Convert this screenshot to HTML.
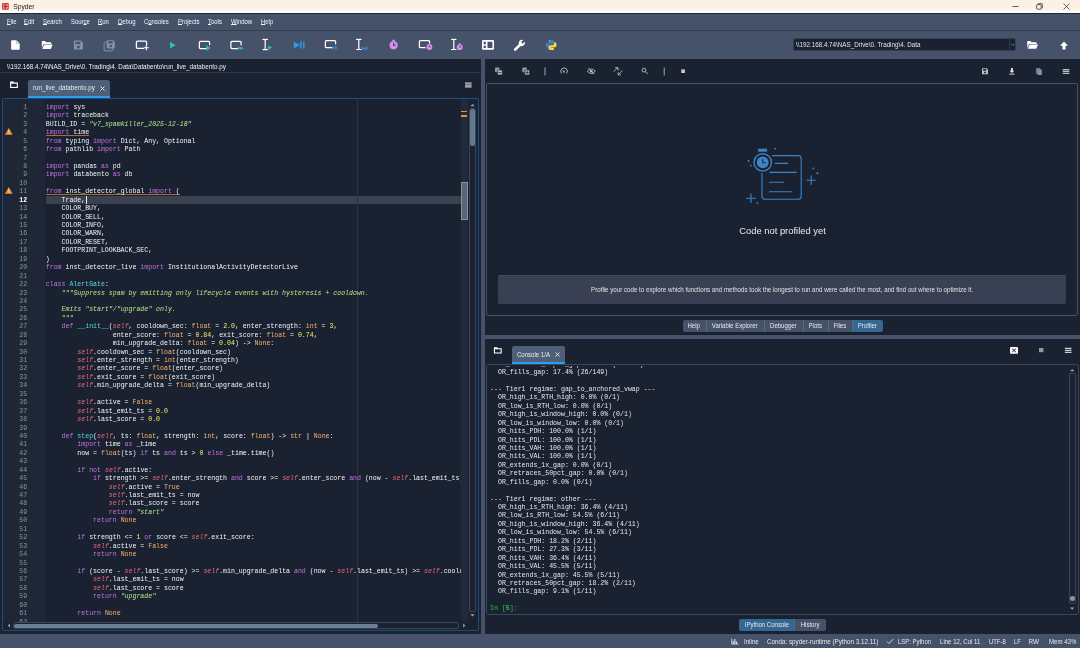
<!DOCTYPE html>
<html lang="en">
<head>
<meta charset="utf-8">
<title>Spyder</title>
<style>
*{box-sizing:border-box;margin:0;padding:0}
html,body{width:1080px;height:648px;overflow:hidden;background:#1a2232}
body{position:relative;font-family:"Liberation Sans","DejaVu Sans",sans-serif;font-size:6.6px;color:#e0e4e8;-webkit-font-smoothing:antialiased;will-change:transform}
.abs{position:absolute}
svg{position:absolute;overflow:visible}
#ico{z-index:10;pointer-events:none}
/* title bar */
#title{left:0;top:0;width:1080px;height:13px;background:linear-gradient(#fbf1e6 0,#fbf1e6 70%,#fffdfb 92%)}
#title .t{left:13.3px;top:1.7px;font-size:6.7px;line-height:9px;color:#1c1c1c}
/* menubar */
#menu{left:0;top:12.5px;width:1080px;height:18px;background:#46526a;border-top:1px solid #1d2633;border-bottom:1px solid #313d4d}
#menu span{position:absolute;transform:scaleX(.93);transform-origin:0 0;top:3.6px;line-height:9px;font-size:6.4px;color:#f2f4f6;white-space:nowrap}
#menu span u{text-decoration-thickness:0.5px;text-underline-offset:.3px}
/* toolbar */
#tool{left:0;top:30.5px;width:1080px;height:28.5px;background:#46526a}
#cwd{left:792.6px;top:37.8px;width:223.4px;height:13.2px;background:#1a2232;border:1px solid #33405a;border-radius:2px;color:#dfe3e8;font-size:6.6px;line-height:11.6px;padding-left:2.6px;white-space:nowrap}
#cwd i{position:absolute;left:215.5px;top:0;width:1px;height:11px;background:#2d384c}
#cwd span{display:inline-block;transform:scaleX(.951);transform-origin:0 0}
/* panes */
#split-v{left:480.7px;top:59px;width:4.4px;height:575px;background:#46526a}
#split-h{left:485px;top:334.6px;width:595px;height:4.6px;background:#46526a}
#status{left:0;top:634px;width:1080px;height:14px;background:#46526a}
#status span{position:absolute;transform:scaleX(.95);transform-origin:0 0;top:3px;line-height:9px;font-size:6.4px;color:#e6e9ec;white-space:nowrap}
/* editor pane */
#path{left:0;top:59px;width:481px;height:14px;border-bottom:1px solid #2c3749}
#path .t{transform:scaleX(.966);transform-origin:0 0;left:7px;top:3px;line-height:9px;font-size:6.5px;color:#eef0f3;white-space:nowrap}
#etab{left:28px;top:80px;width:81.7px;height:18px;background:#4f5f78;border-radius:2.5px 2.5px 0 0;border-bottom:2.3px solid #2a9df0}
#etab .t{transform:scaleX(.967);transform-origin:0 0;left:4.6px;top:3.3px;line-height:9px;font-size:6.5px;color:#e8ecef;white-space:nowrap}
#editor{left:2px;top:98.3px;width:477px;height:533.2px;border:1px solid #1c4d7e;border-radius:2px;background:#1a2232;overflow:hidden}
#gutter{left:0;top:0;width:41.5px;height:523px;background:#1f2736}
#nums{left:0;top:4.6px;width:24.2px}
.num{height:8.4375px;line-height:8.4375px;font-size:6.57px;text-align:right;color:#8a949e;font-family:"Liberation Mono","DejaVu Sans Mono",monospace}
.num.cur{color:#ffffff;font-weight:bold}
#code{left:42.8px;top:4.6px;width:415px;height:518.4px;overflow:hidden}
.ln,.cl{height:8.4375px;line-height:8.4375px;font-size:6.57px;white-space:pre;font-family:"Liberation Mono","DejaVu Sans Mono",monospace;color:#f2f4f6}
.k{color:#c670e0}.s{color:#b0e686;font-style:italic}.n{color:#faed5c}.b{color:#fab16c}.d{color:#57d6e4}.i{color:#ee6772;font-style:italic}
.u{background:linear-gradient(#dc852e,#dc852e) 0 6.2px/100% .75px no-repeat}
#curline{left:43px;top:96.3px;width:415px;height:8.4px;background:#3a4150}
#caret{left:82.6px;top:96.6px;width:1px;height:7.8px;background:#f2f4f6}
#edge{left:354px;top:0;width:1px;height:523px;background:#2a3446}
#flags{left:457.9px;top:0;width:7px;height:522px;background:#212a3a}
#flags i{position:absolute;left:.6px;width:5.6px;height:1.7px;background:#f0932b}
#flags b{position:absolute;left:0;top:82.8px;width:7px;height:38px;background:rgba(140,152,166,.55);border:1px solid rgba(170,180,192,.55)}
#vsb{left:466px;top:8.3px;width:7.2px;height:504px;background:#1a2232;border:1px solid #3b465c;border-radius:2px}
#vsb b{position:absolute;left:.2px;top:.6px;width:4.8px;height:37px;background:#60798b;border-radius:2px}
#hsb{left:9.5px;top:523.2px;width:446.5px;height:6.8px;background:#1a2232;border:1px solid #3b465c;border-radius:2px}
#hsb b{position:absolute;left:.8px;top:.2px;width:364px;height:4.6px;background:#6a8193;border-radius:2px}
/* profiler pane */
#pbox{left:485.8px;top:83.4px;width:592.4px;height:232.8px;border:1px solid #46526a;border-radius:2px;background:#1a2232}
#pmsg{left:486px;top:224px;width:593px;text-align:center;font-size:9.4px;line-height:13px;color:#e8ecef}
#pinfo{left:498.3px;top:274.6px;width:568px;height:29.4px;border-top:1px solid #434c5f;background:#394053;border-radius:2px;text-align:center;font-size:6.5px;line-height:28.4px;color:#dfe3e8;white-space:nowrap}
#pinfo span{display:inline-block;transform:scaleX(.95)}
.tabs{display:flex}
.tabs div span{display:inline-block;transform:scaleX(.925)}
.tabs div{height:11.5px;line-height:11.5px;font-size:6.5px;color:#e6e9ec;background:#46526a;text-align:center;border-right:1px solid #5a6a7c;white-space:nowrap}
.tabs div:first-child{border-radius:2px 0 0 2px}
.tabs div:last-child{border-radius:0 2px 2px 0;border-right:0}
.tabs div.on{background:#346792}
/* console pane */
#ctab{left:512px;top:345.5px;width:53px;height:18.2px;background:#4f5f78;border-radius:2.5px 2.5px 0 0;border-bottom:2.3px solid #2a9df0}
#ctab .t{transform:scaleX(.93);transform-origin:0 0;left:5.1px;top:4.1px;line-height:9px;font-size:6.5px;color:#e8ecef;white-space:nowrap}
#cbox{left:485.5px;top:363.5px;width:593px;height:251px;border:1px solid #3b465c;border-radius:2px;background:#1a2232;overflow:hidden}
#ctext{left:3.6px;top:-3.9px}
#cmask{left:0;top:0;width:580px;height:1.6px;background:#1a2232}
#cvsb{left:582.5px;top:8.5px;width:7.2px;height:231px;background:#1a2232;border:1px solid #3b465c;border-radius:2px}
#cvsb b{position:absolute;left:.4px;top:221.5px;width:4.6px;height:5px;background:#8a97a5;border-radius:2.3px}
.cl{color:#e6e9ec}
.pr{color:#2fc42f}
</style>
</head>
<body>
<!-- ===== title bar ===== -->
<div id="title" class="abs">
  <svg style="left:2.1px;top:2.7px" width="6.8" height="6.8" viewBox="0 0 7 7"><rect x="0" y="0" width="7" height="7" rx="1" fill="#d8383a"/><path d="M1.2 1.5h1.6v1.6H1.2zM4.2 1.5h1.6v1.6H4.2zM1.2 4h1.6v1.6H1.2zM4.2 4h1.6v1.6H4.2z" fill="#fbf4ee" opacity=".85"/><path d="M2 2l3 3M5 2L2 5" stroke="#7a1c1e" stroke-width=".6"/></svg>
  <div class="abs t">Spyder</div>
  <svg style="left:1012px;top:3px" width="7" height="7" viewBox="0 0 7 7"><path d="M0.5 3.5h6" stroke="#222" stroke-width=".7"/></svg>
  <svg style="left:1036px;top:3px" width="7" height="7" viewBox="0 0 7 7"><rect x=".6" y="1.6" width="4.6" height="4.6" rx=".8" fill="none" stroke="#222" stroke-width=".7"/><path d="M2 1.6V1.2q0-.6.6-.6h3.2q.6 0 .6.6v3.2q0 .6-.6.6H5.3" fill="none" stroke="#222" stroke-width=".7"/></svg>
  <svg style="left:1062.5px;top:3px" width="7" height="7" viewBox="0 0 7 7"><path d="M.5.5l6 6M6.5.5l-6 6" stroke="#222" stroke-width=".7"/></svg>
</div>
<!-- ===== menu bar ===== -->
<div id="menu" class="abs">
  <span style="left:6.5px"><u>F</u>ile</span>
  <span style="left:24px"><u>E</u>dit</span>
  <span style="left:43px"><u>S</u>earch</span>
  <span style="left:70.5px">Sour<u>c</u>e</span>
  <span style="left:98px"><u>R</u>un</span>
  <span style="left:117.5px"><u>D</u>ebug</span>
  <span style="left:144px">C<u>o</u>nsoles</span>
  <span style="left:177.5px"><u>P</u>rojects</span>
  <span style="left:208px"><u>T</u>ools</span>
  <span style="left:231px"><u>W</u>indow</span>
  <span style="left:260.5px"><u>H</u>elp</span>
</div>
<!-- ===== main toolbar ===== -->
<div id="tool" class="abs"></div>
<svg id="ico" style="left:0;top:0" width="1080" height="648" viewBox="0 0 1080 648">
<g transform="translate(15.4,45)"><path d="M-4.3,-3.9q0,-.8 .8,-.8H1.1L4.3,-1.5V3.9q0,.8 -.8,.8H-3.5q-.8,0 -.8,-.8z" fill="#ffffff"/><path d="M1.1,-4.7V-1.5H4.3" fill="none" stroke="#9aa5b3" stroke-width=".7"/></g>
<g transform="translate(47.2,45)"><path d="M-5.4,-3.2q0,-.7 .7,-.7H-2.2L-1,-2.7H3.4q.7,0 .7,.7V-1H-3.6L-5.4,3z" fill="#ffffff"/><path d="M-3,-.4H5.5L3.6,3.9H-4.9z" fill="#ffffff"/></g>
<g transform="translate(78.4,45.1)"><path d="M-4.5,-3.6q0,-.9 .9,-.9H2.4L4.5,-2.4V3.6q0,.9 -.9,.9H-3.6q-.9,0 -.9,-.9z" fill="#8492a3"/><rect x="-3" y="-3.3" width="5" height="2.3" fill="#46526a"/><circle cx="0" cy="1.9" r="1.4" fill="#46526a"/></g>
<g transform="translate(109.6,45.4)"><g transform="translate(-1.2,1.1)"><path d="M-4.3,-3.4q0,-.9 .9,-.9H2.3L4.3,-2.3V3.4q0,.9 -.9,.9H-3.4q-.9,0 -.9,-.9z" fill="none" stroke="#8492a3" stroke-width="1"/></g><g transform="translate(1.2,-1.1) scale(.92)"><path d="M-4.5,-3.6q0,-.9 .9,-.9H2.4L4.5,-2.4V3.6q0,.9 -.9,.9H-3.6q-.9,0 -.9,-.9z" fill="#8492a3"/><rect x="-3" y="-3.3" width="5" height="2.3" fill="#46526a"/><circle cx="0" cy="1.9" r="1.4" fill="#46526a"/></g></g>
<g transform="translate(142.0,45)"><path d="M1.6,3.3H-4.6q-1,0 -1,-1V-2.9q0,-1 1,-1H3.6q1,0 1,1V-0.2" fill="none" stroke="#ffffff" stroke-width="1.25" stroke-linecap="round"/><path d="M4.3,0.2V5.2M1.8,2.7H6.8" stroke="#ffffff" stroke-width="1.15"/></g>
<g transform="translate(173,45.2)"><path d="M-3,-3.4 l5.779999999999999,3.4 l-5.779999999999999,3.4 z" fill="#2fc2a2"/></g>
<g transform="translate(205,45.3)"><path d="M1.2,3.3H-4.6q-1,0 -1,-1V-2.9q0,-1 1,-1H3.6q1,0 1,1V-0.6" fill="none" stroke="#ffffff" stroke-width="1.25" stroke-linecap="round"/><path d="M1.2,-0.19999999999999973 l4.76,2.8 l-4.76,2.8 z" fill="#2fc2a2"/></g>
<g transform="translate(236.5,45.3)"><path d="M1.2,3.3H-4.6q-1,0 -1,-1V-2.9q0,-1 1,-1H3.6q1,0 1,1V-0.6" fill="none" stroke="#ffffff" stroke-width="1.25" stroke-linecap="round"/><path d="M1.2,1.0 l3.23,1.9 l-3.23,1.9 z" fill="#2fc2a2"/><path d="M3.9,1.0 l3.23,1.9 l-3.23,1.9 z" fill="#2fc2a2"/></g>
<g transform="translate(265.2,44.5)"><path d="M-2.2,-5.1H-0.9Q0,-5.1 0,-4.2Q0,-5.1 .9,-5.1H2.2M-2.2,5.1H-0.9Q0,5.1 0,4.2Q0,5.1 .9,5.1H2.2M0,-4.4V4.4" fill="none" stroke="#ffffff" stroke-width="1.2" stroke-linecap="round"/><path d="M2.9,0.8000000000000003 l3.9099999999999997,2.3 l-3.9099999999999997,2.3 z" fill="#2fc2a2"/></g>
<g transform="translate(299.5,45)"><path d="M-5.7,-3.5 l5.95,3.5 l-5.95,3.5 z" fill="#2a9df0"/><path d="M1.3,-3.5V3.5M4.3,-3.5V3.5" stroke="#2a9df0" stroke-width="1.5"/></g>
<g transform="translate(331,44.4)"><path d="M1.2,3.3H-4.6q-1,0 -1,-1V-2.9q0,-1 1,-1H3.6q1,0 1,1V-0.6" fill="none" stroke="#ffffff" stroke-width="1.25" stroke-linecap="round"/><path d="M1.0,1.5999999999999999 l3.06,1.8 l-3.06,1.8 z" fill="#2a9df0"/><path d="M4.6,1.7V5.1M6.1,1.7V5.1" stroke="#2a9df0" stroke-width=".8"/></g>
<g transform="translate(358.8,44.4)"><path d="M-2.2,-5.1H-0.9Q0,-5.1 0,-4.2Q0,-5.1 .9,-5.1H2.2M-2.2,5.1H-0.9Q0,5.1 0,4.2Q0,5.1 .9,5.1H2.2M0,-4.4V4.4" fill="none" stroke="#ffffff" stroke-width="1.2" stroke-linecap="round"/><path d="M3.0,2.2 l3.06,1.8 l-3.06,1.8 z" fill="#2a9df0"/><path d="M6.8,2.3V5.7M8.3,2.3V5.7" stroke="#2a9df0" stroke-width=".8"/></g>
<g transform="translate(393.6,45.3)"><g transform="translate(0,0)"><circle r="4.1" fill="#d78ff0"/><rect x="-1.2299999999999998" y="-5.535" width="2.4599999999999995" height="2.05" fill="#d78ff0"/><path d="M0,-2.4599999999999995V0H2.05" fill="none" stroke="#46526a" stroke-width="1.152"/></g></g>
<g transform="translate(425,44.4)"><path d="M1.2,3.3H-4.6q-1,0 -1,-1V-2.9q0,-1 1,-1H3.6q1,0 1,1V-0.6" fill="none" stroke="#ffffff" stroke-width="1.25" stroke-linecap="round"/><circle cx="4.4" cy="2.6" r="3.9" fill="#46526a"/><g transform="translate(4.4,2.6)"><circle r="2.9" fill="#d78ff0"/><rect x="-0.87" y="-3.915" width="1.74" height="1.45" fill="#d78ff0"/><path d="M0,-1.74V0H1.45" fill="none" stroke="#46526a" stroke-width="0.888"/></g></g>
<g transform="translate(453.8,44.4)"><path d="M-2.2,-5.1H-0.9Q0,-5.1 0,-4.2Q0,-5.1 .9,-5.1H2.2M-2.2,5.1H-0.9Q0,5.1 0,4.2Q0,5.1 .9,5.1H2.2M0,-4.4V4.4" fill="none" stroke="#ffffff" stroke-width="1.2" stroke-linecap="round"/><g transform="translate(5.9,2.8)"><circle r="2.9" fill="#d78ff0"/><rect x="-0.87" y="-3.915" width="1.74" height="1.45" fill="#d78ff0"/><path d="M0,-1.74V0H1.45" fill="none" stroke="#46526a" stroke-width="0.888"/></g></g>
<g transform="translate(488,44.9)"><rect x="-6" y="-4.9" width="12" height="9.8" rx="1.2" fill="#ffffff"/><rect x="-4.4" y="-3.2" width="2.2" height="2.5" rx=".3" fill="#46526a"/><rect x="-4.4" y=".7" width="2.2" height="2.5" rx=".3" fill="#46526a"/><rect x="-.5" y="-3.2" width="4.9" height="6.4" rx=".3" fill="#46526a"/></g>
<g transform="translate(519.7,45.4)"><path d="M-5.5,3.4L-0.9,-1.2A3.4,3.4 0 0 1 3.5,-5.4L1.4,-3.3L3.0,-1.7L5.1,-3.8A3.4,3.4 0 0 1 0.9,0.6L-3.7,5.2A1.27,1.27 0 0 1 -5.5,3.4z" fill="#ffffff"/></g>
<g transform="translate(551.2,44.9)"><path d="M-.2,-5.2C-2.9,-5.2 -2.7,-4 -2.7,-4V-2.8H0V-2.4H-3.8C-3.8,-2.4 -5.3,-2.6 -5.3,.1C-5.3,2.8 -3.7,2.6 -3.7,2.6H-2.7V1.2C-2.7,1.2 -2.8,-.4 -1.2,-.4H1.4C1.4,-.4 2.7,-.4 2.7,-1.8V-3.9C2.7,-3.9 2.9,-5.2 -.2,-5.2z" fill="#3d7ebd"/><circle cx="-1.5" cy="-4" r=".5" fill="#fff"/><path d="M.2,5.2C2.9,5.2 2.7,4 2.7,4V2.8H0V2.4H3.8C3.8,2.4 5.3,2.6 5.3,-.1C5.3,-2.8 3.7,-2.6 3.7,-2.6H2.7V-1.2C2.7,-1.2 2.8,.4 1.2,.4H-1.4C-1.4,.4 -2.7,.4 -2.7,1.8V3.9C-2.7,3.9 -2.9,5.2 .2,5.2z" fill="#f6d54a"/><circle cx="1.5" cy="4" r=".5" fill="#fff"/></g>
<g transform="translate(1012.8,44.6)"><path d="M-1.5,-.8L0,.8L1.5,-.8" fill="none" stroke="#7f8c9b" stroke-width=".8"/></g>
<g transform="translate(1032.6,44.9)"><path d="M-5.4,-3.2q0,-.7 .7,-.7H-2.2L-1,-2.7H3.4q.7,0 .7,.7V-1H-3.6L-5.4,3z" fill="#ffffff"/><path d="M-3,-.4H5.5L3.6,3.9H-4.9z" fill="#ffffff"/></g>
<g transform="translate(1064,45.4)"><path d="M0,-4L4,.3H1.5V4H-1.5V.3H-4z" fill="#ffffff"/></g>
<g transform="translate(14,84.8)"><path d="M-3.9,-3.2H-.6L.3,-2.2H3.9V3.2H-3.9z" fill="#fff"/><rect x="-2.8" y="-1.1" width="5.6" height="3.2" fill="#1a2232"/></g>
<g transform="translate(468.3,85)"><path d="M-3.3,-1.9H3.3M-3.3,0H3.3M-3.3,1.9H3.3" stroke="#c5ccd4" stroke-width="1.25"/></g>
<g transform="translate(8.8,131.6)"><path d="M0,-3.2L3.4,2.8H-3.4z" fill="#f0932b" stroke="#f0932b" stroke-width=".6" stroke-linejoin="round"/><path d="M0,-1.4V.9M0,1.5V2.2" stroke="#fff3e0" stroke-width=".7"/></g>
<g transform="translate(8.8,190.7)"><path d="M0,-3.2L3.4,2.8H-3.4z" fill="#f0932b" stroke="#f0932b" stroke-width=".6" stroke-linejoin="round"/><path d="M0,-1.4V.9M0,1.5V2.2" stroke="#fff3e0" stroke-width=".7"/></g>
<g transform="translate(498.6,71.2)"><rect x="-3.6" y="-3.6" width="4.6" height="4.6" rx=".8" fill="#8e99a7"/><rect x="-1.2" y="-1.2" width="4.9" height="4.9" rx=".8" fill="#b9c1ca" stroke="#1a2232" stroke-width=".7"/><path d="M-.2,1.25H2.7" stroke="#1a2232" stroke-width=".8"/></g>
<g transform="translate(525.9,71.2)"><rect x="-3.6" y="-3.6" width="4.6" height="4.6" rx=".8" fill="#8e99a7"/><rect x="-1.2" y="-1.2" width="4.9" height="4.9" rx=".8" fill="#b9c1ca" stroke="#1a2232" stroke-width=".7"/><path d="M1.25,-.2V2.7M-.2,1.25H2.7" stroke="#1a2232" stroke-width=".8"/></g>
<rect x="544.5" y="67.4" width="1" height="8" fill="#9aa5b1"/>
<g transform="translate(564.1,71.3)"><path d="M-2.5,2.1A3.3,3.3 0 1 1 2.5,2.1" fill="none" stroke="#b9c1ca" stroke-width=".9"/><path d="M0,.6L-1.3,-1.3" stroke="#b9c1ca" stroke-width=".9"/><circle cx="0" cy=".6" r=".8" fill="#b9c1ca"/></g>
<g transform="translate(591.3,71.2)"><path d="M-4,0Q0,-4.6 4,0Q0,4.6 -4,0z" fill="none" stroke="#b9c1ca" stroke-width=".9"/><circle r="1.3" fill="#b9c1ca"/><path d="M-3,-3L3,3" stroke="#b9c1ca" stroke-width=".9"/></g>
<g transform="translate(618,71.3)"><path d="M-4.3,.4L-.3,-3.6M-2.9,-3.7H-.2V-1" fill="none" stroke="#b9c1ca" stroke-width=".85"/><path d="M4.4,-.8L.3,3.4M.2,.9V3.6H2.9" fill="none" stroke="#b9c1ca" stroke-width=".85"/><path d="M-.2,-3.6L2.2,-1.2" fill="none" stroke="#b9c1ca" stroke-width=".6" opacity=".6"/></g>
<g transform="translate(644.7,70.9)"><circle cx="-.8" cy="-.8" r="1.9" fill="none" stroke="#b9c1ca" stroke-width=".9"/><path d="M.6,.6L3,3" stroke="#b9c1ca" stroke-width="1"/></g>
<rect x="663.7" y="67.4" width="1" height="8" fill="#9aa5b1"/>
<rect x="681.3" y="69.4" width="3.6" height="3.6" fill="#c5ccd4"/>
<g transform="translate(985,71.3)"><path d="M-3,-3H1.8L3,-1.8V3H-3z" fill="#b9c1ca"/><rect x="-1.9" y="-2.3" width="3.2" height="1.6" fill="#1a2232"/><circle cy="1.2" r=".95" fill="#1a2232"/></g>
<g transform="translate(1011.9,71.3)"><path d="M-.9,-3.2H.9V-.6H2.4L0,1.8L-2.4,-.6H-.9z" fill="#e8ecef"/><path d="M-2.6,2.8H2.6" stroke="#e8ecef" stroke-width=".9"/></g>
<g transform="translate(1038.8,71.5)"><rect x="-2.9" y="-3.4" width="4.3" height="5.6" rx=".7" fill="#6f7b8a"/><rect x="-1.3" y="-2.2" width="4.3" height="5.8" rx=".7" fill="#8792a0"/></g>
<g transform="translate(1066,71.4)"><path d="M-3.3,-1.9H3.3M-3.3,0H3.3M-3.3,1.9H3.3" stroke="#b4bcc6" stroke-width="1.25"/></g>
<g><path d="M772,155.6H798.2q3,0 3,3V196.2q0,3 -3,3H765q-3,0 -3,-3V173" fill="none" stroke="#3b84c8" stroke-width="1.1"/><path d="M775,163.4H788M769.5,172.4H796.8M769,182.3H784M769,191.8H791.8" stroke="#3b84c8" stroke-width="1.1"/><circle cx="762.7" cy="162.4" r="8.7" fill="#1a2232" stroke="#3b84c8" stroke-width="1.4"/><circle cx="762.7" cy="162.4" r="5.9" fill="#3b84c8"/><path d="M762.7,159.2V162.7H765.6" fill="none" stroke="#1a2232" stroke-width="1"/><rect x="758.1" y="148.7" width="9" height="3" fill="#3b84c8"/><path d="M751,193.4V203M746.2,198.2H755.8M811.2,175.6V185M806.5,180.3H815.9" stroke="#3b84c8" stroke-width="1.1"/><circle cx="775.3" cy="148.7" r="0.9" fill="#3b84c8"/><circle cx="748.5" cy="161" r="0.9" fill="#3f8f9a"/><circle cx="750.8" cy="165.6" r="0.9" fill="#3f8f9a"/><circle cx="813.4" cy="168.5" r="0.9" fill="#3b84c8"/><circle cx="817.4" cy="173.2" r="0.9" fill="#7f8ea3"/><circle cx="757.4" cy="203" r="0.9" fill="#3b84c8"/></g>
<g transform="translate(497.8,350.4)"><path d="M-3.9,-3.2H-.6L.3,-2.2H3.9V3.2H-3.9z" fill="#fff"/><rect x="-2.8" y="-1.1" width="5.6" height="3.2" fill="#1a2232"/></g>
<g transform="translate(1014,350.4)"><rect x="-4" y="-3.4" width="8" height="6.8" rx="1" fill="#fff"/><path d="M-1.9,-1.7L1.9,1.7M1.9,-1.7L-1.9,1.7" stroke="#1a2232" stroke-width="1"/></g>
<rect x="1039" y="348" width="4.4" height="4.2" fill="#8e99a6"/>
<g transform="translate(1068.2,350.4)"><path d="M-3.3,-1.9H3.3M-3.3,0H3.3M-3.3,1.9H3.3" stroke="#c5ccd4" stroke-width="1.25"/></g>
<g transform="translate(735,641.3)"><path d="M-3.2,-2.8V2.8H3.4" fill="none" stroke="#e6e9ec" stroke-width=".8"/><path d="M-1.7,2.4V-.4M-.1,2.4V-2.2M1.5,2.4V.2" stroke="#e6e9ec" stroke-width="1.1"/></g>
<g transform="translate(890,641.4)"><path d="M-3,.1L-1,2.1L3,-2.2" fill="none" stroke="#e6e9ec" stroke-width=".9"/></g>
<g transform="translate(472.5,105.2)"><path d="M-2.2,1L0,-1.1L2.2,1z" fill="#9aa5b1"/></g>
<g transform="translate(472.5,615.3)"><path d="M-2.2,-1L0,1.1L2.2,-1z" fill="#9aa5b1"/></g>
<g transform="translate(9,625.6)"><path d="M1,-2.2L-1.1,0L1,2.2z" fill="#9aa5b1"/></g>
<g transform="translate(464.2,625.6)"><path d="M-1,-2.2L1.1,0L-1,2.2z" fill="#9aa5b1"/></g>
<g transform="translate(1072.2,370.2)"><path d="M-2.2,1L0,-1.1L2.2,1z" fill="#9aa5b1"/></g>
<g transform="translate(1072.2,608.6)"><path d="M-2.2,-1L0,1.1L2.2,-1z" fill="#9aa5b1"/></g>
</svg>
<div id="cwd" class="abs"><span>\\192.168.4.74\NAS_Drive\0. Trading\4. Data</span><i></i></div>
<!-- ===== splitters ===== -->
<div id="split-v" class="abs"></div>
<div id="split-h" class="abs"></div>
<!-- ===== editor pane ===== -->
<div id="path" class="abs"><div class="abs t">\\192.168.4.74\NAS_Drive\0. Trading\4. Data\Databento\run_live_databento.py</div></div>
<div id="etab" class="abs"><div class="abs t">run_live_databento.py</div>
  <svg style="left:71.7px;top:5.6px" width="5" height="5" viewBox="0 0 5 5"><path d="M.5.5l4 4M4.5.5l-4 4" stroke="#fff" stroke-width=".8"/></svg>
</div>
<div id="editor" class="abs">
  <div id="gutter" class="abs"></div>
  <div id="curline" class="abs"></div>
  <div id="edge" class="abs"></div>
  <div id="caret" class="abs"></div>
  <div id="nums" class="abs">
<div class="num">1</div>
<div class="num">2</div>
<div class="num">3</div>
<div class="num">4</div>
<div class="num">5</div>
<div class="num">6</div>
<div class="num">7</div>
<div class="num">8</div>
<div class="num">9</div>
<div class="num">10</div>
<div class="num">11</div>
<div class="num cur">12</div>
<div class="num">13</div>
<div class="num">14</div>
<div class="num">15</div>
<div class="num">16</div>
<div class="num">17</div>
<div class="num">18</div>
<div class="num">19</div>
<div class="num">20</div>
<div class="num">21</div>
<div class="num">22</div>
<div class="num">23</div>
<div class="num">24</div>
<div class="num">25</div>
<div class="num">26</div>
<div class="num">27</div>
<div class="num">28</div>
<div class="num">29</div>
<div class="num">30</div>
<div class="num">31</div>
<div class="num">32</div>
<div class="num">33</div>
<div class="num">34</div>
<div class="num">35</div>
<div class="num">36</div>
<div class="num">37</div>
<div class="num">38</div>
<div class="num">39</div>
<div class="num">40</div>
<div class="num">41</div>
<div class="num">42</div>
<div class="num">43</div>
<div class="num">44</div>
<div class="num">45</div>
<div class="num">46</div>
<div class="num">47</div>
<div class="num">48</div>
<div class="num">49</div>
<div class="num">50</div>
<div class="num">51</div>
<div class="num">52</div>
<div class="num">53</div>
<div class="num">54</div>
<div class="num">55</div>
<div class="num">56</div>
<div class="num">57</div>
<div class="num">58</div>
<div class="num">59</div>
<div class="num">60</div>
<div class="num">61</div>
<div class="num">62</div>
  </div>
  <div id="code" class="abs">
<div class="ln"><span class="k">import</span> sys</div>
<div class="ln"><span class="k">import</span> traceback</div>
<div class="ln">BUILD_ID = <span class="s">"v7_spamkiller_2025-12-18"</span></div>
<div class="ln"><span class="u"><span class="k">import</span> time</span></div>
<div class="ln"><span class="k">from</span> typing <span class="k">import</span> Dict, Any, Optional</div>
<div class="ln"><span class="k">from</span> pathlib <span class="k">import</span> Path</div>
<div class="ln">&nbsp;</div>
<div class="ln"><span class="k">import</span> pandas <span class="k">as</span> pd</div>
<div class="ln"><span class="k">import</span> databento <span class="k">as</span> db</div>
<div class="ln">&nbsp;</div>
<div class="ln"><span class="u"><span class="k">from</span> inst_detector_global <span class="k">import</span> (</span></div>
<div class="ln">    Trade,</div>
<div class="ln">    COLOR_BUY,</div>
<div class="ln">    COLOR_SELL,</div>
<div class="ln">    COLOR_INFO,</div>
<div class="ln">    COLOR_WARN,</div>
<div class="ln">    COLOR_RESET,</div>
<div class="ln">    FOOTPRINT_LOOKBACK_SEC,</div>
<div class="ln">)</div>
<div class="ln"><span class="k">from</span> inst_detector_live <span class="k">import</span> InstitutionalActivityDetectorLive</div>
<div class="ln">&nbsp;</div>
<div class="ln"><span class="k">class</span> <span class="d">AlertGate</span>:</div>
<div class="ln">    <span class="s">"""Suppress spam by emitting only lifecycle events with hysteresis + cooldown.</span></div>
<div class="ln">&nbsp;</div>
<div class="ln">    <span class="s">Emits "start"/"upgrade" only.</span></div>
<div class="ln">    <span class="s">"""</span></div>
<div class="ln">    <span class="k">def</span> <span class="d">__init__</span>(<span class="i">self</span>, cooldown_sec: <span class="b">float</span> = <span class="n">2.0</span>, enter_strength: <span class="b">int</span> = <span class="n">3</span>,</div>
<div class="ln">                 enter_score: <span class="b">float</span> = <span class="n">0.84</span>, exit_score: <span class="b">float</span> = <span class="n">0.74</span>,</div>
<div class="ln">                 min_upgrade_delta: <span class="b">float</span> = <span class="n">0.04</span>) -&gt; <span class="b">None</span>:</div>
<div class="ln">        <span class="i">self</span>.cooldown_sec = <span class="b">float</span>(cooldown_sec)</div>
<div class="ln">        <span class="i">self</span>.enter_strength = <span class="b">int</span>(enter_strength)</div>
<div class="ln">        <span class="i">self</span>.enter_score = <span class="b">float</span>(enter_score)</div>
<div class="ln">        <span class="i">self</span>.exit_score = <span class="b">float</span>(exit_score)</div>
<div class="ln">        <span class="i">self</span>.min_upgrade_delta = <span class="b">float</span>(min_upgrade_delta)</div>
<div class="ln">&nbsp;</div>
<div class="ln">        <span class="i">self</span>.active = <span class="b">False</span></div>
<div class="ln">        <span class="i">self</span>.last_emit_ts = <span class="n">0.0</span></div>
<div class="ln">        <span class="i">self</span>.last_score = <span class="n">0.0</span></div>
<div class="ln">&nbsp;</div>
<div class="ln">    <span class="k">def</span> <span class="d">step</span>(<span class="i">self</span>, ts: <span class="b">float</span>, strength: <span class="b">int</span>, score: <span class="b">float</span>) -&gt; <span class="b">str</span> | <span class="b">None</span>:</div>
<div class="ln">        <span class="k">import</span> time <span class="k">as</span> _time</div>
<div class="ln">        now = <span class="b">float</span>(ts) <span class="k">if</span> ts <span class="k">and</span> ts &gt; <span class="n">0</span> <span class="k">else</span> _time.time()</div>
<div class="ln">&nbsp;</div>
<div class="ln">        <span class="k">if</span> <span class="k">not</span> <span class="i">self</span>.active:</div>
<div class="ln">            <span class="k">if</span> strength &gt;= <span class="i">self</span>.enter_strength <span class="k">and</span> score &gt;= <span class="i">self</span>.enter_score <span class="k">and</span> (now - <span class="i">self</span>.last_emit_ts) &gt;= <span class="i">self</span>.cooldown_sec:</div>
<div class="ln">                <span class="i">self</span>.active = <span class="b">True</span></div>
<div class="ln">                <span class="i">self</span>.last_emit_ts = now</div>
<div class="ln">                <span class="i">self</span>.last_score = score</div>
<div class="ln">                <span class="k">return</span> <span class="s">"start"</span></div>
<div class="ln">            <span class="k">return</span> <span class="b">None</span></div>
<div class="ln">&nbsp;</div>
<div class="ln">        <span class="k">if</span> strength &lt;= <span class="n">1</span> <span class="k">or</span> score &lt;= <span class="i">self</span>.exit_score:</div>
<div class="ln">            <span class="i">self</span>.active = <span class="b">False</span></div>
<div class="ln">            <span class="k">return</span> <span class="b">None</span></div>
<div class="ln">&nbsp;</div>
<div class="ln">        <span class="k">if</span> (score - <span class="i">self</span>.last_score) &gt;= <span class="i">self</span>.min_upgrade_delta <span class="k">and</span> (now - <span class="i">self</span>.last_emit_ts) &gt;= <span class="i">self</span>.cooldown_sec:</div>
<div class="ln">            <span class="i">self</span>.last_emit_ts = now</div>
<div class="ln">            <span class="i">self</span>.last_score = score</div>
<div class="ln">            <span class="k">return</span> <span class="s">"upgrade"</span></div>
<div class="ln">&nbsp;</div>
<div class="ln">        <span class="k">return</span> <span class="b">None</span></div>
<div class="ln">&nbsp;</div>
  </div>
  <div id="flags" class="abs"><i style="top:11.4px"></i><i style="top:15.6px"></i><b></b></div>
  <div id="vsb" class="abs"><b></b></div>
  <div id="hsb" class="abs"><b></b></div>
</div>
<!-- ===== profiler pane ===== -->
<div id="pbox" class="abs"></div>
<div id="pmsg" class="abs">Code not profiled yet</div>
<div id="pinfo" class="abs"><span>Profile your code to explore which functions and methods took the longest to run and were called the most, and find out where to optimize it.</span></div>
<div class="abs tabs" style="left:682.5px;top:320px">
  <div style="width:24px"><span>Help</span></div><div style="width:58px"><span>Variable Explorer</span></div><div style="width:39px"><span>Debugger</span></div><div style="width:25px"><span>Plots</span></div><div style="width:24px"><span>Files</span></div><div class="on" style="width:30.5px"><span>Profiler</span></div>
</div>
<!-- ===== console pane ===== -->
<div id="ctab" class="abs"><div class="abs t">Console 1/A</div>
  <svg style="left:43px;top:6px" width="5" height="5" viewBox="0 0 5 5"><path d="M.5.5l4 4M4.5.5l-4 4" stroke="#fff" stroke-width=".8"/></svg>
</div>
<div id="cbox" class="abs">
  <div id="ctext" class="abs">
<div class="cl">  OR_retraces_50pct_gap: 17.4% (26/149)</div>
<div class="cl">  OR_fills_gap: 17.4% (26/149)</div>
<div class="cl">&nbsp;</div>
<div class="cl">--- Tier1 regime: gap_to_anchored_vwap ---</div>
<div class="cl">  OR_high_is_RTH_high: 0.0% (0/1)</div>
<div class="cl">  OR_low_is_RTH_low: 0.0% (0/1)</div>
<div class="cl">  OR_high_is_window_high: 0.0% (0/1)</div>
<div class="cl">  OR_low_is_window_low: 0.0% (0/1)</div>
<div class="cl">  OR_hits_PDH: 100.0% (1/1)</div>
<div class="cl">  OR_hits_PDL: 100.0% (1/1)</div>
<div class="cl">  OR_hits_VAH: 100.0% (1/1)</div>
<div class="cl">  OR_hits_VAL: 100.0% (1/1)</div>
<div class="cl">  OR_extends_1x_gap: 0.0% (0/1)</div>
<div class="cl">  OR_retraces_50pct_gap: 0.0% (0/1)</div>
<div class="cl">  OR_fills_gap: 0.0% (0/1)</div>
<div class="cl">&nbsp;</div>
<div class="cl">--- Tier1 regime: other ---</div>
<div class="cl">  OR_high_is_RTH_high: 36.4% (4/11)</div>
<div class="cl">  OR_low_is_RTH_low: 54.5% (6/11)</div>
<div class="cl">  OR_high_is_window_high: 36.4% (4/11)</div>
<div class="cl">  OR_low_is_window_low: 54.5% (6/11)</div>
<div class="cl">  OR_hits_PDH: 18.2% (2/11)</div>
<div class="cl">  OR_hits_PDL: 27.3% (3/11)</div>
<div class="cl">  OR_hits_VAH: 36.4% (4/11)</div>
<div class="cl">  OR_hits_VAL: 45.5% (5/11)</div>
<div class="cl">  OR_extends_1x_gap: 45.5% (5/11)</div>
<div class="cl">  OR_retraces_50pct_gap: 18.2% (2/11)</div>
<div class="cl">  OR_fills_gap: 9.1% (1/11)</div>
<div class="cl">&nbsp;</div>
<div class="cl"><span class="pr">In [<b>5</b>]:</span></div>
  </div>
  <div id="cmask" class="abs"></div>
  <div id="cvsb" class="abs"><b></b></div>
</div>
<div class="abs tabs" style="left:739px;top:619px">
  <div class="on" style="width:56px"><span>IPython Console</span></div><div style="width:31px"><span>History</span></div>
</div>
<!-- ===== status bar ===== -->
<div id="status" class="abs">
  <span style="left:743.5px">Inline</span>
  <span style="left:767px;transform:scaleX(.98)">Conda: spyder-runtime (Python 3.12.11)</span>
  <span style="left:898px;transform:scaleX(.93)">LSP: Python</span>
  <span style="left:939.5px">Line 12, Col 11</span>
  <span style="left:988.5px;transform:scaleX(.92)">UTF-8</span>
  <span style="left:1014px;transform:scaleX(.9)">LF</span>
  <span style="left:1028.6px;transform:scaleX(1)">RW</span>
  <span style="left:1049px">Mem 43%</span>
</div>
</body>
</html>
